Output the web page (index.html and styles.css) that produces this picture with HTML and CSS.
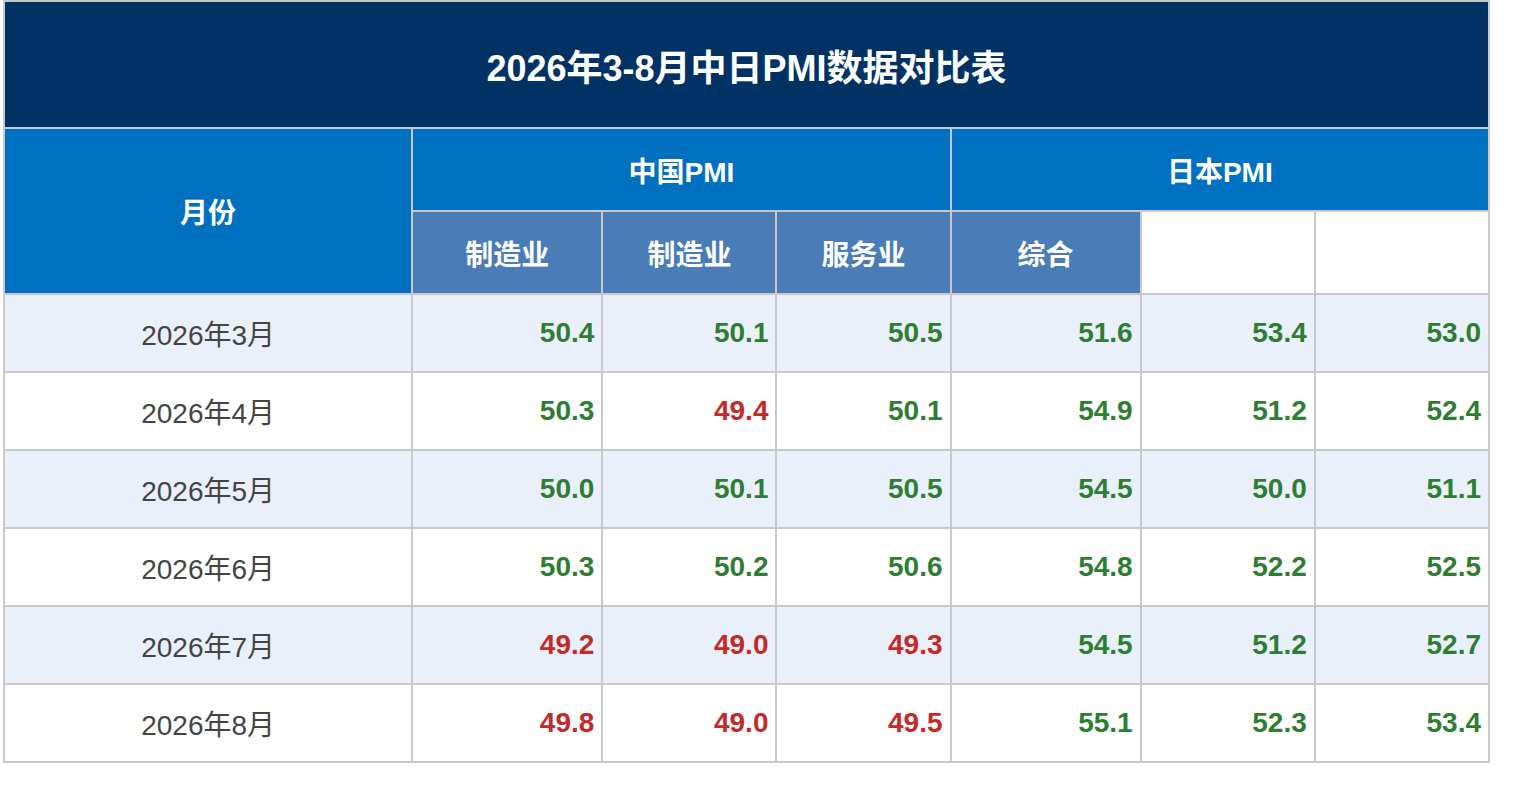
FILE: index.html
```html
<!DOCTYPE html>
<html lang="zh-CN">
<head>
<meta charset="utf-8">
<title>2026年3-8月中日PMI数据对比表</title>
<link rel="stylesheet" href="styles.css">
</head>
<body>
<table class="pmi">
  <colgroup>
    <col class="c-month">
    <col class="c-a">
    <col class="c-b">
    <col class="c-b">
    <col class="c-a">
    <col class="c-b">
    <col class="c-b">
  </colgroup>
  <thead>
    <tr class="r-title"><th colspan="7" class="title">2026年3-8月中日PMI数据对比表</th></tr>
    <tr class="r-h1">
      <th rowspan="2" class="h-main">月份</th>
      <th colspan="3" class="h-main">中国PMI</th>
      <th colspan="3" class="h-main">日本PMI</th>
    </tr>
    <tr class="r-h2">
      <th class="h-sub">制造业</th>
      <th class="h-sub">制造业</th>
      <th class="h-sub">服务业</th>
      <th class="h-sub">综合</th>
      <th class="h-empty"></th>
      <th class="h-empty"></th>
    </tr>
  </thead>
  <tbody>
    <tr class="odd"><td class="m">2026年3月</td><td class="up">50.4</td><td class="up">50.1</td><td class="up">50.5</td><td class="up">51.6</td><td class="up">53.4</td><td class="up">53.0</td></tr>
    <tr><td class="m">2026年4月</td><td class="up">50.3</td><td class="dn">49.4</td><td class="up">50.1</td><td class="up">54.9</td><td class="up">51.2</td><td class="up">52.4</td></tr>
    <tr class="odd"><td class="m">2026年5月</td><td class="up">50.0</td><td class="up">50.1</td><td class="up">50.5</td><td class="up">54.5</td><td class="up">50.0</td><td class="up">51.1</td></tr>
    <tr><td class="m">2026年6月</td><td class="up">50.3</td><td class="up">50.2</td><td class="up">50.6</td><td class="up">54.8</td><td class="up">52.2</td><td class="up">52.5</td></tr>
    <tr class="odd"><td class="m">2026年7月</td><td class="dn">49.2</td><td class="dn">49.0</td><td class="dn">49.3</td><td class="up">54.5</td><td class="up">51.2</td><td class="up">52.7</td></tr>
    <tr><td class="m">2026年8月</td><td class="dn">49.8</td><td class="dn">49.0</td><td class="dn">49.5</td><td class="up">55.1</td><td class="up">52.3</td><td class="up">53.4</td></tr>
  </tbody>
</table>
</body>
</html>
```
FILE: styles.css
```css
html, body {
  margin: 0;
  padding: 0;
  background: #ffffff;
}
body {
  padding: 0 0 0 3px;
  font-family: "Liberation Sans", Arial, "Noto Sans CJK SC", sans-serif;
}
.pmi {
  border-collapse: collapse;
  table-layout: fixed;
  width: 1487px;
}
.c-month { width: 408px; }
.c-a { width: 190px; }
.c-b { width: 174px; }

.pmi th, .pmi td {
  border: 2px solid #c9c9cc;
  padding: 0 7px;
}
.r-title th { height: 125px; }
.r-h1 th { height: 81px; }
.r-h2 th { height: 81px; }
.pmi tbody td { height: 76px; }

.title {
  background: #003264;
  color: #ffffff;
  font-size: 36px;
  font-weight: bold;
  text-align: center;
  border-color: #6a7f99;
  padding-bottom: 12px;
}
.h-main {
  background: #0070c0;
  color: #ffffff;
  font-size: 28px;
  font-weight: bold;
  text-align: center;
  padding-bottom: 6px;
}
.h-sub {
  background: #4a7db8;
  color: #ffffff;
  font-size: 28px;
  font-weight: bold;
  text-align: center;
  padding-bottom: 5px;
}
.h-empty {
  background: #ffffff;
  border-color: #dcdce4;
}
.pmi tbody tr { background: #ffffff; }
.pmi tbody tr.odd { background: #e9f0f9; }
.m {
  text-align: center;
  font-size: 28px;
  color: #444444;
}
.up, .dn {
  text-align: right;
  font-size: 28px;
  font-weight: bold;
  padding-right: 5px;
  padding-bottom: 4px;
}
.up { color: #2e7d32; }
.dn { color: #c62828; }
```
